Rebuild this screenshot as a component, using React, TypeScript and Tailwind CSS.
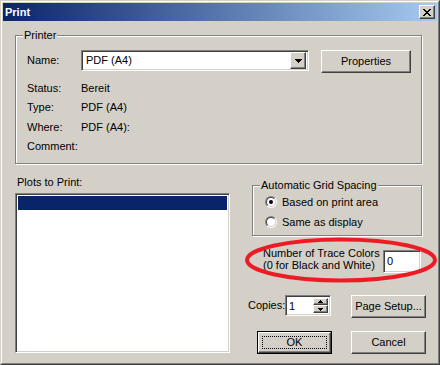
import React from "react";

const raised =
  "border border-t-white border-l-white border-r-[#404040] border-b-[#404040] shadow-[inset_-1px_-1px_0_#808080] bg-[#d4d0c8]";
const sunken =
  "border border-t-[#808080] border-l-[#808080] border-r-white border-b-white shadow-[inset_1px_1px_0_#404040,inset_-1px_-1px_0_#d4d0c8] bg-white";
const etched =
  "border border-[#808080] shadow-[1px_1px_0_#fff,inset_1px_1px_0_#fff]";

function CloseGlyph() {
  const rows = [
    "XX....XX",
    ".XX..XX.",
    "..XXXX..",
    "...XX...",
    "..XXXX..",
    ".XX..XX.",
    "XX....XX",
  ];
  return (
    <svg width="8" height="7" shapeRendering="crispEdges">
      {rows.map((r, y) =>
        r.split("").map((c, x) =>
          c === "X" ? <rect key={`${x}-${y}`} x={x} y={y} width="1" height="1" fill="#000" /> : null
        )
      )}
    </svg>
  );
}

function DownArrow() {
  return (
    <svg width="7" height="4" shapeRendering="crispEdges">
      <rect x="0" y="0" width="7" height="1" fill="#000" />
      <rect x="1" y="1" width="5" height="1" fill="#000" />
      <rect x="2" y="2" width="3" height="1" fill="#000" />
      <rect x="3" y="3" width="1" height="1" fill="#000" />
    </svg>
  );
}

function SmallArrow({ up }: { up: boolean }) {
  return (
    <svg width="5" height="3" shapeRendering="crispEdges" className={up ? "" : "rotate-180"}>
      <rect x="2" y="0" width="1" height="1" fill="#000" />
      <rect x="1" y="1" width="3" height="1" fill="#000" />
      <rect x="0" y="2" width="5" height="1" fill="#000" />
    </svg>
  );
}

function Radio({ checked }: { checked: boolean }) {
  return (
    <div className="w-[12px] h-[12px] rounded-full border border-t-[#808080] border-l-[#808080] border-r-white border-b-white shrink-0">
      <div className="w-full h-full rounded-full border border-t-[#404040] border-l-[#404040] border-r-[#d4d0c8] border-b-[#d4d0c8] bg-white flex items-center justify-center">
        {checked && <div className="w-[4px] h-[4px] rounded-full bg-black" />}
      </div>
    </div>
  );
}

export default function App() {
  return (
    <div className="w-[440px] h-[365px] bg-[#d4d0c8] font-['Liberation_Sans',Arial,sans-serif] text-[11px] text-black border border-t-[#d4d0c8] border-l-[#d4d0c8] border-r-[#404040] border-b-[#404040]">
      <div className="w-full h-full border border-t-white border-l-white border-r-[#808080] border-b-[#808080] p-[1px] flex flex-col">
        {/* Title bar */}
        <div className="h-[18px] flex items-center bg-[linear-gradient(to_right,#0a246a,#a6caf0)] pl-[2px]">
          <span className="text-white font-bold text-[11px] leading-[13px]">Print</span>
          <div className={`${raised} ml-auto mr-[2px] w-[16px] h-[14px] flex items-center justify-center`}>
            <CloseGlyph />
          </div>
        </div>

        {/* Client */}
        <div className="flex-1 flex flex-col">
          {/* Printer groupbox */}
          <div className={`${etched} relative ml-[12px] mt-[14px] w-[407px] h-[129px] pt-[14px] pl-[11px]`}>
            <span className="absolute left-[7px] top-[-7px] px-[1px] bg-[#d4d0c8] leading-[13px]">Printer</span>
            <div className="flex items-start">
              <span className="w-[54px] leading-[21px]">Name:</span>
              <div className={`${sunken} w-[228px] h-[21px] flex items-center p-[2px]`}>
                <span className="pl-[2px] leading-[13px]">PDF (A4)</span>
                <div className={`${raised} ml-auto w-[16px] h-[17px] flex items-center justify-center`}>
                  <DownArrow />
                </div>
              </div>
              <div className={`${raised} ml-[12px] w-[90px] h-[23px] flex items-center justify-center`}>
                Properties
              </div>
            </div>
            <div className="mt-[6px] grid grid-cols-[54px_1fr]">
              <span className="leading-[19px]">Status:</span>
              <span className="leading-[19px]">Bereit</span>
              <span className="leading-[19px]">Type:</span>
              <span className="leading-[19px]">PDF (A4)</span>
              <span className="leading-[20px]">Where:</span>
              <span className="leading-[20px]">PDF (A4):</span>
              <span className="leading-[19px]">Comment:</span>
              <span className="leading-[19px]"></span>
            </div>
          </div>

          {/* Bottom section */}
          <div className="flex">
            <div className="ml-[12px] w-[215px] flex flex-col">
              <span className="mt-[12px] pl-[2px] leading-[13px]">Plots to Print:</span>
              <div className={`${sunken} mt-[4px] h-[160px] p-[2px]`}>
                <div className="h-[14px] bg-[#0a246a]" />
              </div>
            </div>

            <div className="ml-[15px] w-[192px] relative flex flex-col">
              {/* Grid spacing groupbox */}
              <div className={`${etched} relative ml-[7px] mt-[21px] w-[170px] h-[51px] pt-[6px] pl-[12px]`}>
                <span className="absolute left-[7px] top-[-7px] px-[1px] bg-[#d4d0c8] leading-[13px]">
                  Automatic Grid Spacing
                </span>
                <div className="h-[20px] flex items-center gap-[5px]">
                  <Radio checked />
                  <span className="leading-[13px]">Based on print area</span>
                </div>
                <div className="h-[20px] flex items-center gap-[5px]">
                  <Radio checked={false} />
                  <span className="leading-[13px]">Same as display</span>
                </div>
              </div>

              {/* Trace colors */}
              <div className="mt-[14px] flex items-start">
                <div className="ml-[18px] w-[120px] mt-[-3px] flex flex-col">
                  <span className="leading-[12px]">Number of Trace Colors</span>
                  <span className="leading-[12px]">(0 for Black and White)</span>
                </div>
                <div className={`${sunken} w-[38px] h-[23px] flex items-center pl-[3px]`}>
                  <span className="leading-[13px]">0</span>
                </div>
              </div>

              {/* Copies row */}
              <div className="mt-[22px] flex items-start">
                <span className="ml-[3px] w-[37px] leading-[21px]">Copies:</span>
                <div className={`${sunken} w-[46px] h-[21px] flex p-[2px]`}>
                  <span className="pl-[1px] leading-[17px] flex-1">1</span>
                  <div className="w-[15px] flex flex-col">
                    <div className={`${raised} h-[8px] flex items-center justify-center`}>
                      <SmallArrow up />
                    </div>
                    <div className={`${raised} h-[9px] flex items-center justify-center`}>
                      <SmallArrow up={false} />
                    </div>
                  </div>
                </div>
                <div className={`${raised} ml-[20px] w-[75px] h-[23px] flex items-center justify-center`}>
                  Page Setup...
                </div>
              </div>

              {/* Buttons row */}
              <div className="mt-[13px] flex items-start">
                <div className="ml-[12px] w-[75px] h-[23px] border border-black">
                  <div className={`${raised} w-full h-full p-[3px]`}>
                    <div className="w-full h-full border border-dotted border-black flex items-center justify-center">
                      OK
                    </div>
                  </div>
                </div>
                <div className={`${raised} ml-[19px] w-[75px] h-[23px] flex items-center justify-center`}>
                  Cancel
                </div>
              </div>

              {/* Red annotation ellipse */}
              <svg
                className="absolute left-0 top-[73px] pointer-events-none"
                width="192"
                height="46"
              >
                <ellipse cx="96" cy="23" rx="94" ry="20.5" fill="none" stroke="#ed1c24" strokeWidth="4" />
              </svg>
            </div>
          </div>
        </div>
      </div>
    </div>
  );
}
